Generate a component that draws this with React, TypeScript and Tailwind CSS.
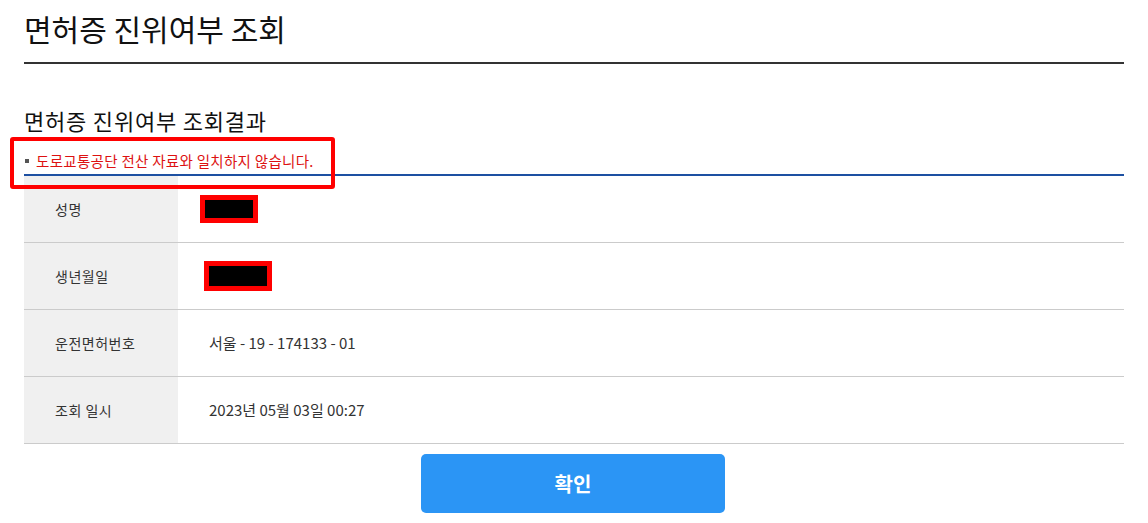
import React from 'react';

const rows = [
  { label: '성명', redact: 'w-[58px] h-[28px] ml-[-9px]' },
  { label: '생년월일', redact: 'w-[68px] h-[30px] ml-[-5px]' },
  { label: '운전면허번호', value: '서울 - 19 - 174133 - 01' },
  { label: '조회 일시', value: '2023년 05월 03일 00:27' },
];

export default function App() {
  return (
    <div className="relative w-[1148px] h-[523px] bg-white font-['Noto_Sans_CJK_KR','Noto_Sans',sans-serif] text-[#222]">
      <div className="px-6">
        <h1 className="h-[64px] pt-[10px] text-[30px] leading-[36px] font-normal text-[#111] border-b-2 border-[#333]">
          면허증 진위여부 조회
        </h1>

        <h2 className="mt-[42px] text-[22px] leading-[28px] tracking-[0.8px] font-normal text-[#111]">
          면허증 진위여부 조회결과
        </h2>

        <div className="mt-[17px] flex items-center gap-[7px] pb-[3px] border-b-2 border-[#1d50a2]">
          <span className="ml-[1px] w-[4px] h-[4px] bg-[#555]" />
          <span className="text-[14.5px] leading-[20px] tracking-[0.3px] text-[#d11]">
            도로교통공단 전산 자료와 일치하지 않습니다.
          </span>
        </div>

        <div className="flex flex-col">
          {rows.map((row) => (
            <div key={row.label} className="flex h-[67px] border-b border-[#cbcbcb]">
              <div className="w-[154px] bg-[#f0f0f0] flex items-center pl-[31px] text-[14px] tracking-[0.5px] text-[#333]">
                {row.label}
              </div>
              <div className="flex-1 flex items-center pl-[31px] text-[15px] text-[#333]">
                {row.value ? (
                  row.value
                ) : (
                  <span className={`block bg-black border-[5px] border-[#f00] ${row.redact}`} />
                )}
              </div>
            </div>
          ))}
        </div>

        <div className="flex justify-center mt-[10px]">
          <button className="ml-[-2px] w-[304px] h-[59px] rounded-[5px] bg-[#2b95f5] text-white text-[20px] font-bold">
            확인
          </button>
        </div>
      </div>

      <div className="absolute left-[10px] top-[137px] w-[325px] h-[52px] border-4 border-[#f00] rounded-[3px]" />
    </div>
  );
}
